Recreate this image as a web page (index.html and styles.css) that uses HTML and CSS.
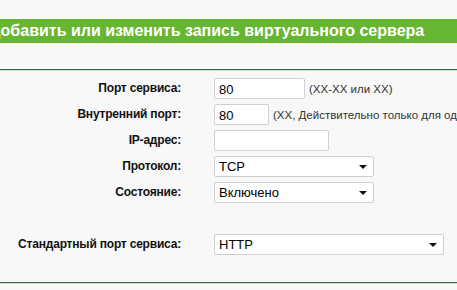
FILE: index.html
```html
<!DOCTYPE html>
<html lang="ru">
<head>
    <meta charset="UTF-8">
    <title>Виртуальный сервер</title>
    <link rel="stylesheet" href="styles.css">
</head>
<body>
    <div class="titulo">
        <h2>Добавить или изменить запись виртуального сервера</h2>
    </div>

    <div class="linha"></div>

    <form class="formulario">
        <label class="rotulo">Порт сервиса:</label>
        <div class="campo">
            <input type="text" class="entrada largo" value="80">
            <span class="dica">(XX-XX или XX)</span>
        </div>

        <label class="rotulo">Внутренний порт:</label>
        <div class="campo">
            <input type="text" class="entrada curto" value="80">
            <span class="dica">(XX, Действительно только для одного порта сервиса)</span>
        </div>

        <label class="rotulo">IP-адрес:</label>
        <div class="campo">
            <input type="text" class="entrada ip" value="">
        </div>

        <label class="rotulo">Протокол:</label>
        <div class="campo">
            <span class="seletor">
                <select class="escolha">
                    <option>TCP</option>
                    <option>UDP</option>
                    <option>ВСЕ</option>
                </select>
            </span>
        </div>

        <label class="rotulo">Состояние:</label>
        <div class="campo">
            <span class="seletor">
                <select class="escolha">
                    <option>Включено</option>
                    <option>Выключено</option>
                </select>
            </span>
        </div>

        <!-- linha vazia entre os grupos -->
        <div class="espaco"></div>

        <label class="rotulo">Стандартный порт сервиса:</label>
        <div class="campo">
            <span class="seletor grande">
                <select class="escolha">
                    <option>HTTP</option>
                    <option>FTP</option>
                </select>
            </span>
        </div>
    </form>

    <div class="linha"></div>
</body>
</html>
```

FILE: styles.css
```css
body {
    margin: 0;
    background-color: #f8f8f8;
    font-family: "Liberation Sans", Arial, sans-serif;
    overflow: hidden;
}

.titulo {
    margin-top: 19px;
    height: 24px;
    background-color: #66b632;
    overflow: hidden;
}

.titulo h2 {
    margin: 0 0 0 -11px;
    font-size: 16px;
    line-height: 24px;
    font-weight: bold;
    color: white;
    white-space: nowrap;
}

.linha {
    margin-top: 26px;
    height: 1px;
    background-color: #2c6a43;
    border-bottom: 1px solid #c3e3cc;
}

.formulario + .linha {
    margin-top: 0;
}

.formulario {
    display: grid;
    grid-template-columns: 181px 1fr;
    grid-auto-rows: 21px;
    column-gap: 33px;
    row-gap: 5px;
    padding-top: 7px;
    padding-bottom: 27px;
}

.espaco {
    grid-column: span 2;
}

.rotulo {
    font-size: 12px;
    font-weight: bold;
    letter-spacing: -0.2px;
    color: #111;
    text-align: right;
    line-height: 21px;
    white-space: nowrap;
}

.campo {
    display: flex;
    align-items: center;
    white-space: nowrap;
}

.entrada {
    box-sizing: border-box;
    height: 21px;
    border: 1px solid #cfcfd4;
    border-radius: 2px;
    background-color: white;
    font-family: "Liberation Sans", Arial, sans-serif;
    font-size: 13px;
    padding: 2px 4px 0 4px;
    color: #000;
}

.largo {
    width: 91px;
}

.curto {
    width: 55px;
}

.ip {
    width: 115px;
}

.dica {
    margin-left: 4px;
    font-size: 11.5px;
    color: #333;
}

.seletor {
    position: relative;
    display: inline-block;
    width: 160px;
    height: 21px;
}

.seletor.grande {
    width: 230px;
}

.seletor::after {
    content: "";
    position: absolute;
    right: 7px;
    top: 9px;
    border-left: 4px solid transparent;
    border-right: 4px solid transparent;
    border-top: 4px solid #111;
    pointer-events: none;
}

.escolha {
    appearance: none;
    -webkit-appearance: none;
    box-sizing: border-box;
    width: 100%;
    height: 21px;
    border: 1px solid #cfcfd4;
    border-radius: 2px;
    background-color: white;
    font-family: "Liberation Sans", Arial, sans-serif;
    font-size: 13px;
    padding: 0 4px;
    color: #000;
}
```
